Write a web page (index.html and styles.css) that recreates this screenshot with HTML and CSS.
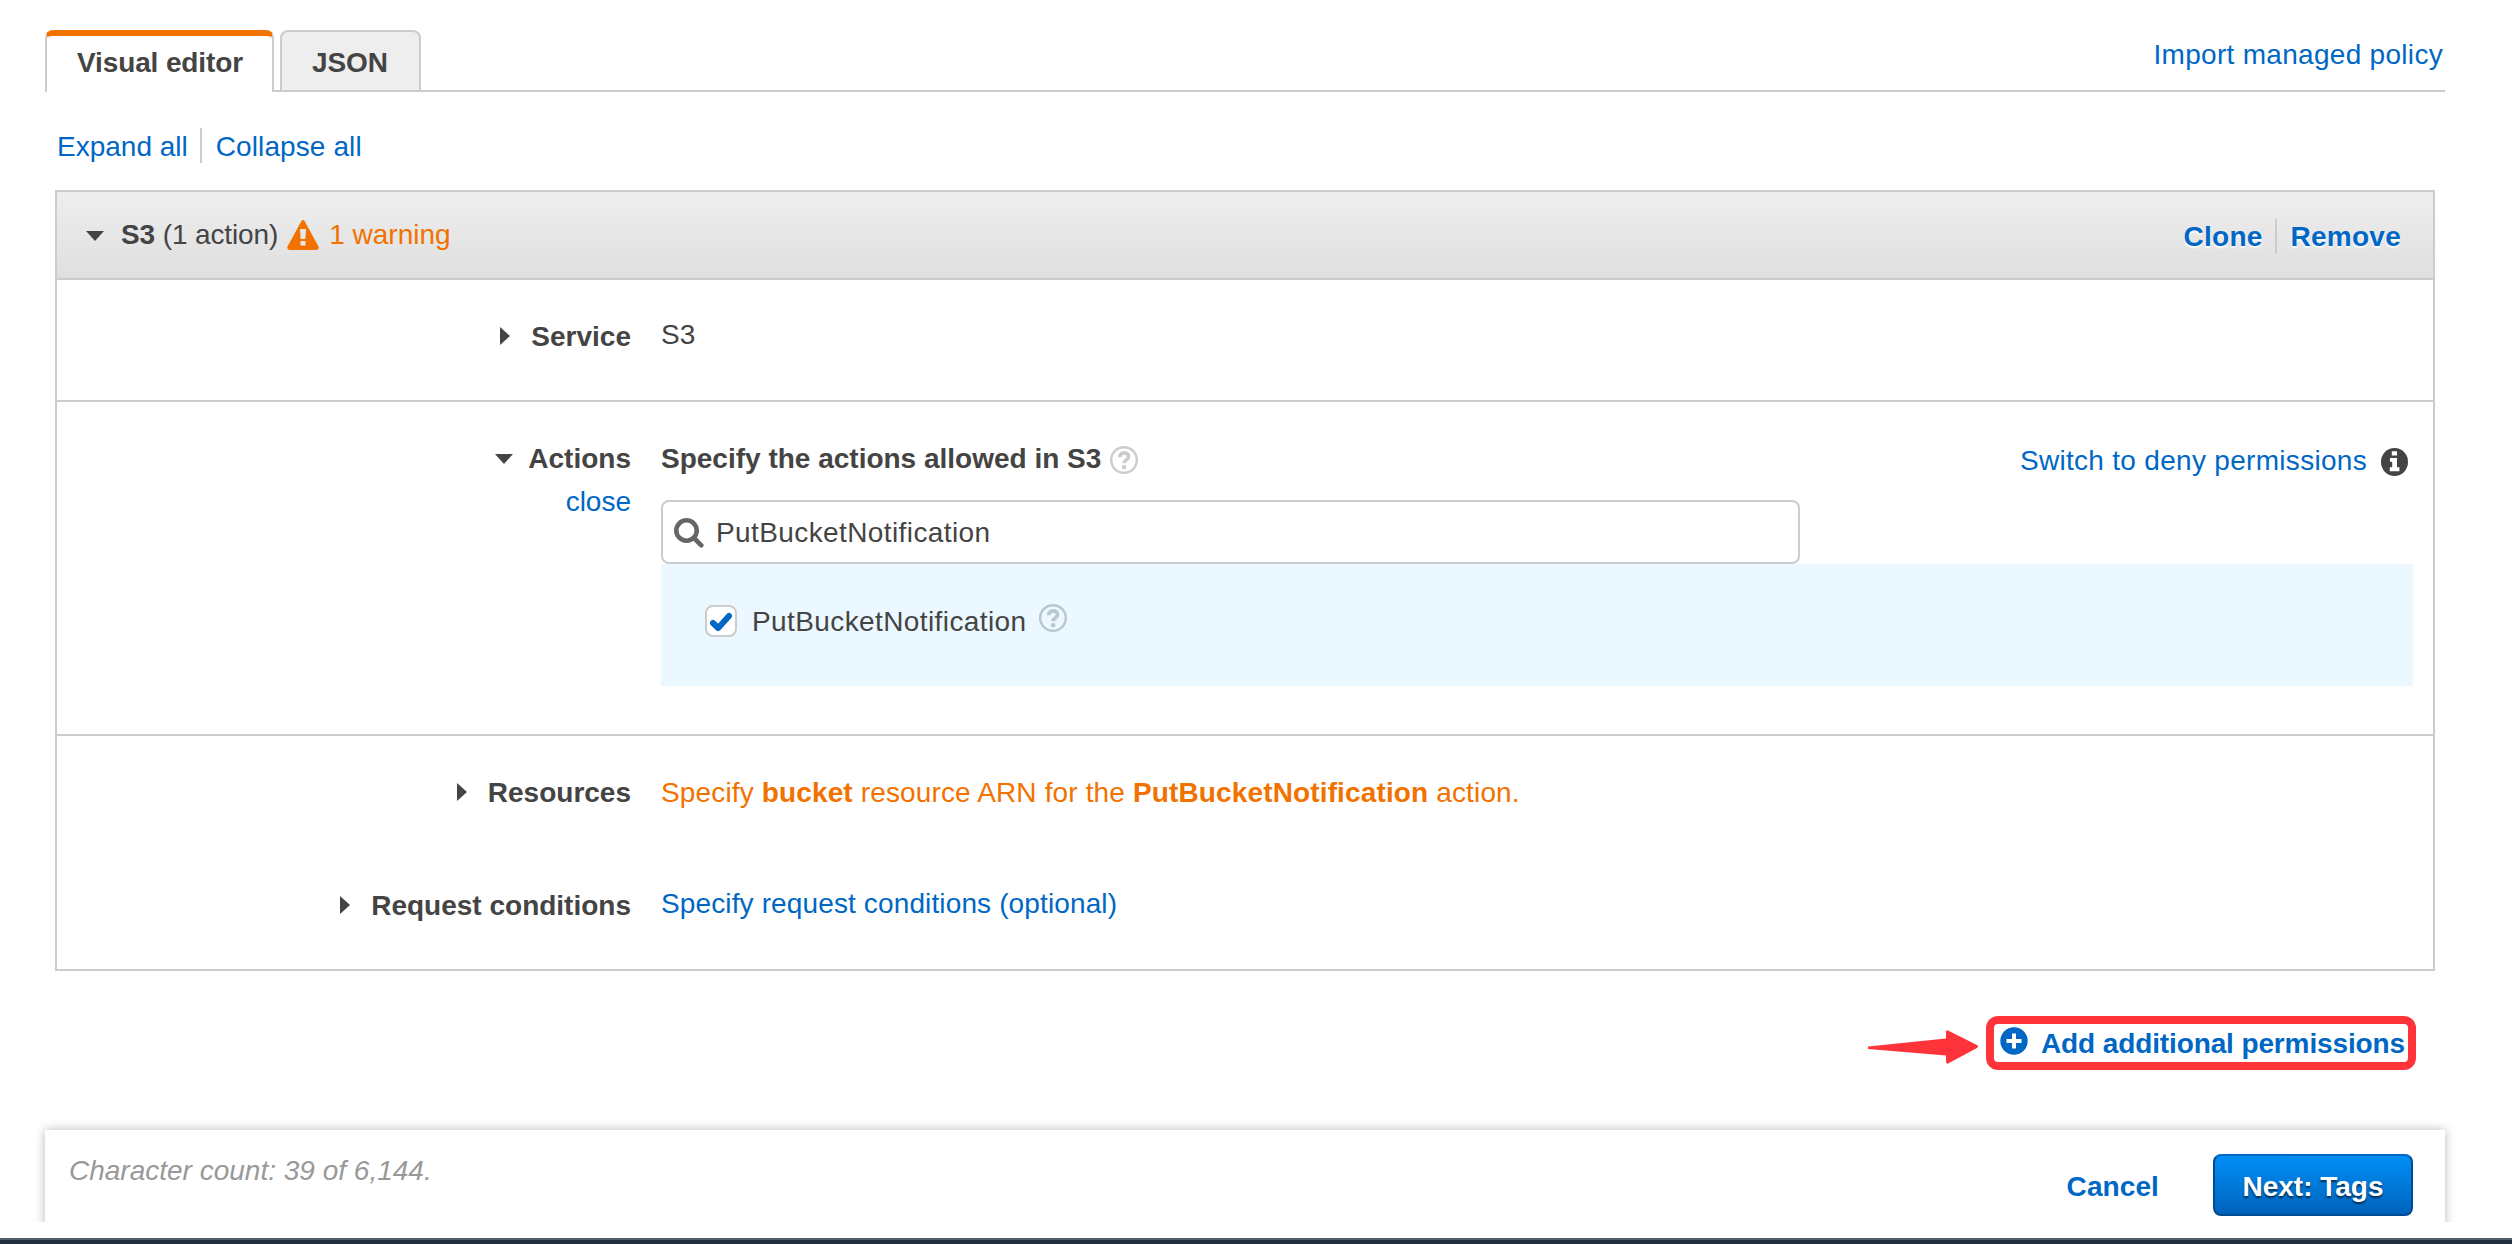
FILE: index.html
```html
<!DOCTYPE html>
<html lang="en">
<head>
<meta charset="utf-8">
<title>Visual editor</title>
<link rel="stylesheet" href="styles.css">
</head>
<body>
<nav class="tabs">
  <div class="tab tab-active">Visual editor</div>
  <div class="tab">JSON</div>
  <a class="import">Import managed policy</a>
</nav>
<div class="toggles">
  <a>Expand all</a><i class="divider"></i><a class="collapse">Collapse all</a>
</div>
<section class="panel">
  <header class="panel-head">
    <i class="caret caret-down"></i>
    <span class="head-title"><b>S3</b> (1 action)</span>
    <svg class="warn-icon" viewBox="0 0 32 30"><path fill="#f27200" d="M14.300 1.200Q16-1.200 17.700 1.200L31.500 26.500Q32.500 29.500 29.500 30H2.500Q-.5 29.500.5 26.500Z"/><path fill="#e8e8e8" d="M13 9h6l-.6 10h-4.800ZM13.500 21h5v4.500h-5Z"/></svg>
    <span class="warn-text">1 warning</span>
    <div class="head-actions"><a>Clone</a><i class="divider"></i><a>Remove</a></div>
  </header>
  <div class="row row-service">
    <div class="label"><i class="caret caret-right"></i><b>Service</b></div>
    <div class="value">S3</div>
  </div>
  <div class="row row-actions">
    <div class="label-col">
      <div class="label"><i class="caret caret-down"></i><b>Actions</b></div>
      <a class="close">close</a>
    </div>
    <div class="actions">
      <div class="actions-head">
        <b>Specify the actions allowed in S3</b>
        <svg class="help" viewBox="0 0 28 28"><circle cx="14" cy="14" r="12.800"/><path d="M9.800 11.200C9.800 5.400 18.600 5.600 18.600 10.600C18.600 13.800 14.200 13.600 14.200 17.200"/><path class="dot" d="M12 19.300h4.200v3.700H12Z"/></svg>
        <a class="switch">Switch to deny permissions</a>
        <svg class="info" viewBox="0 0 27 28"><ellipse cx="13.500" cy="14" rx="13.500" ry="14" fill="#444"/><path fill="#fff" d="M10.800 3.200h5.200v4.200h-5.200ZM9 10h7v9.200h2.400v4H8.800v-4h2.400v-5.400H9Z"/></svg>
      </div>
      <div class="search">
        <svg class="search-icon" viewBox="0 0 30 30"><circle cx="12.500" cy="12.500" r="10.200"/><path d="M20 20L27.300 27.300"/></svg>
        <span class="action-name">PutBucketNotification</span>
      </div>
      <div class="result">
        <span class="check"><svg viewBox="0 0 22 20"><path d="M3 11L8.200 16L19 4"/></svg></span>
        <span class="result-text action-name">PutBucketNotification</span>
        <svg class="help" viewBox="0 0 28 28"><circle cx="14" cy="14" r="12.800"/><path d="M9.800 11.200C9.800 5.400 18.600 5.600 18.600 10.600C18.600 13.800 14.200 13.600 14.200 17.200"/><path class="dot" d="M12 19.300h4.200v3.700H12Z"/></svg>
      </div>
    </div>
  </div>
  <div class="row row-resources">
    <div class="label"><i class="caret caret-right"></i><b>Resources</b></div>
    <div class="value warn-text">Specify <b>bucket</b> resource ARN for the <b>PutBucketNotification</b> action.</div>
  </div>
  <div class="row row-conditions">
    <div class="label"><i class="caret caret-right"></i><b>Request conditions</b></div>
    <a class="value">Specify request conditions (optional)</a>
  </div>
</section>
<div class="add-line">
  <svg class="arrow" viewBox="0 0 110 34"><path fill="#ff343a" d="M0 16.500L78 8.500V2Q78-1 81 1L109 15Q111 16.500 109 18L81 33Q78 35 78 31V25.500L0 19Z"/></svg>
  <a class="add">
    <svg class="plus" viewBox="0 0 28 28"><circle cx="14" cy="14" r="13.700" fill="#0067c5"/><path d="M14 6.500v15M6.500 14h15" stroke="#fff" stroke-width="4"/></svg>
    <b>Add additional permissions</b>
  </a>
</div>
<div class="footer-clip">
  <footer class="footer">
    <em class="count">Character count: 39 of 6,144.</em>
    <a class="cancel"><b>Cancel</b></a>
    <div class="next">Next: Tags</div>
  </footer>
</div>
<div class="bottom-bar"></div>
</body>
</html>
```

FILE: styles.css
```css
* { box-sizing: border-box; }
body {
  margin: 0;
  width: 2512px;
  height: 1244px;
  overflow: hidden;
  display: flex;
  flex-direction: column;
  background: #fff;
  color: #444;
  font: 28px/33px "Liberation Sans", Arial, sans-serif;
  white-space: nowrap;
}
a { color: #0067c5; }
svg { display: block; flex: none; }
.divider { width: 2px; height: 35px; background: #ccc; }

.tabs {
  display: flex;
  height: 92px;
  margin: 0 67px 0 45px;
  padding-top: 30px;
  border-bottom: 2px solid #ccc;
}
.tab {
  height: 60px;
  width: 141px;
  padding: 14px 0 0 30px;
  border: 2px solid #ccc;
  border-bottom: 0;
  border-radius: 8px 8px 0 0;
  background: #eee;
  font-weight: bold;
  letter-spacing: -.12px;
}
.tab-active {
  width: 229px;
  height: 62px;
  margin-right: 6px;
  padding-top: 10px;
  border-top: 6px solid #f27200;
  background: #fff;
}
.import { margin: 8px 2px 0 auto; letter-spacing: .3px; }

.toggles { display: flex; height: 98px; padding: 36px 0 0 57px; }
.toggles a { margin-top: 2px; }
.toggles .divider { margin: 0 14px 0 12px; }
.collapse { letter-spacing: .1px; }

.panel {
  width: 2380px;
  height: 781px;
  margin-left: 55px;
  border: 2px solid #ccc;
}
.panel-head {
  display: flex;
  height: 88px;
  padding: 26px 32px 0 29px;
  border-bottom: 2px solid #ccc;
  background: linear-gradient(#eee, #dfdfdf);
}
.caret { width: 0; height: 0; flex: none; }
.caret-down { border: 9px solid transparent; border-top: 10px solid #444; border-bottom: 0; }
.caret-right { border: 9px solid transparent; border-left: 10px solid #444; border-right: 0; }
.panel-head .caret { margin: 13px 17px 0 0; }
.head-title { letter-spacing: -.12px; }
.warn-icon { width: 32px; height: 30px; margin: 2px 10px 0 9px; }
.warn-text { color: #f27200; }
.head-actions {
  display: flex;
  margin-left: auto;
  font-weight: bold;
  letter-spacing: .25px;
  text-shadow: 0 2px 2px #fff;
}
.head-actions a { margin-top: 2px; }
.head-actions .divider { margin: 1px 14px 0 12px; }

.row { display: grid; grid-template-columns: 574px 1fr; column-gap: 30px; }
.label { display: flex; justify-content: flex-end; }
.label .caret { margin: 7px 21px 0 0; }
.label .caret-down { margin: 12px 15px 0 0; }
.row-service { height: 122px; padding-top: 40px; border-bottom: 2px solid #ccc; }
.row-service .value { margin-top: -2px; }
.row-actions { height: 334px; padding-top: 40px; border-bottom: 2px solid #ccc; }
.close { display: block; margin-top: 10px; text-align: right; }
.actions { margin-right: 20px; }
.actions-head { display: flex; height: 58px; }
.actions-head .help { margin: 4px 0 0 9px; }
.help { width: 28px; height: 28px; fill: none; stroke: #ccc; stroke-width: 2.400px; }
.help path { stroke-width: 3.600px; }
.help .dot { fill: #ccc; stroke: none; }
.switch { margin: 2px 14px 0 auto; letter-spacing: .3px; }
.info { width: 27px; height: 28px; margin: 6px 5px 0 0; }
.search {
  display: flex;
  width: 1139px;
  height: 64px;
  padding: 14px 11px 0;
  border: 2px solid #ccc;
  border-radius: 8px;
}
.search-icon { width: 30px; height: 30px; margin: 2px 12px 0 0; fill: none; stroke: #666; stroke-width: 4.600px; stroke-linecap: round; }
.action-name { letter-spacing: .4px; }
.result {
  display: flex;
  height: 122px;
  padding: 41px 0 0 44px;
  background: #ecf8ff;
}
.check { width: 32px; height: 32px; padding: 5px 3px; border: 2px solid #ccc; border-radius: 8px; background: #fff; }
.check svg { width: 22px; height: 20px; fill: none; stroke: #0067c5; stroke-width: 6px; stroke-linecap: round; stroke-linejoin: round; }
.result-text { margin-left: 15px; }
.result .help { margin: -1px 0 0 12px; stroke: #b9c6cf; }
.result .help .dot { fill: #b9c6cf; }
.row-resources { padding-top: 40px; }
.row-resources .value { letter-spacing: .14px; }
.row-conditions { padding-top: 80px; }
.row-conditions .value { margin-top: -2px; letter-spacing: .13px; }

.add-line { display: flex; height: 159px; padding: 45px 96px 0 0; justify-content: flex-end; }
.arrow { width: 110px; height: 34px; margin: 14px 8px 0 0; }
.add {
  display: flex;
  width: 430px;
  height: 54px;
  padding: 3px 0 0 6px;
  border: 8px solid #ff343a;
  border-radius: 12px;
  letter-spacing: -.12px;
}
.plus { width: 28px; height: 28px; margin-right: 13px; }
.footer-clip {
  box-sizing: content-box;
  height: 92px;
  margin-top: -20px;
  padding: 20px 47px 0 25px;
  overflow: hidden;
}
.footer {
  display: flex;
  height: 140px;
  margin: 0 20px;
  padding: 24px 32px 0 24px;
  box-shadow: 0 0 10px rgba(0, 0, 0, .28);
}
.count { color: #999; }
.cancel { margin: 16px 54px 0 auto; letter-spacing: .1px; }
.next {
  width: 200px;
  height: 62px;
  padding: 14px 0 0;
  border: 2px solid #004b91;
  border-top-color: #0067c5;
  border-radius: 8px;
  background: linear-gradient(#008ff5, #0063bd);
  color: #fff;
  font-weight: bold;
  text-align: center;
  text-shadow: 0 2px 2px rgba(0, 0, 0, .6);
}
.bottom-bar { height: 6px; margin-top: 16px; border-top: 2px solid #515c68; background: #1f2d3d; }
```
